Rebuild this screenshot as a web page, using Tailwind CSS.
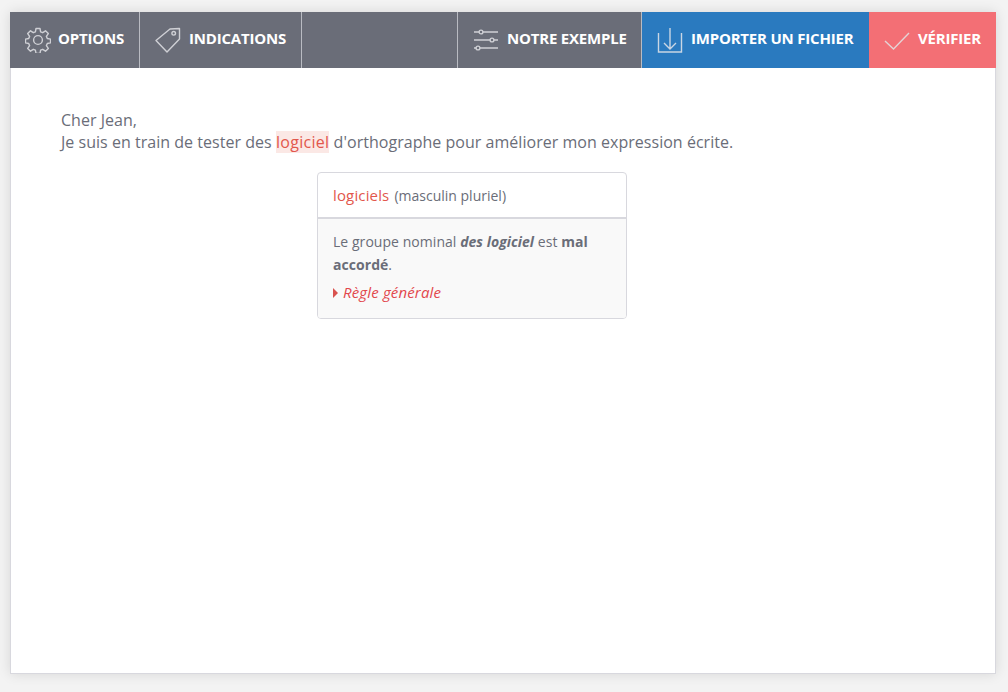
<!DOCTYPE html>
<html lang="fr">
  <head>
    <meta charset="UTF-8" />
    <title>Correcteur</title>
    <script src="https://cdn.jsdelivr.net/npm/@tailwindcss/browser@4"></script>
  </head>
  <body class="h-[692px] overflow-hidden bg-[#f3f3f3] pt-3 pl-[10px] font-['Open_Sans',sans-serif] text-[#6a6d78]">
    <div class="flex h-[662px] w-[986px] flex-col bg-white shadow-[0_0_12px_rgba(0,0,0,0.12)] border-b border-l border-r border-[#d8d8de]">
      <!-- toolbar -->
      <div class="-mx-px flex h-14 shrink-0 bg-[#6a6d78] text-[15px] font-bold tracking-[-0.2px] text-white">
        <div class="flex w-[130px] items-center gap-[7px] border-r border-[#b9bbc2] pl-[15px]">
          <svg class="h-[26px] w-[26px]" viewBox="0 0 26 26" fill="none" stroke="#cfd0d5" stroke-width="1.4" stroke-linejoin="round">
            <circle cx="13" cy="13" r="4.4" />
            <path d="M11 1.5h4l.6 3.3 2.1.9 2.8-1.9 2.8 2.8-1.9 2.8.9 2.1 3.2.6v3.8l-3.2.6-.9 2.1 1.9 2.8-2.8 2.8-2.8-1.9-2.1.9-.6 3.2h-4l-.6-3.2-2.1-.9-2.8 1.9-2.8-2.8 1.9-2.8-.9-2.1-3.2-.6v-3.8l3.2-.6.9-2.1-1.9-2.8 2.8-2.8 2.8 1.9 2.1-.9z" />
          </svg>
          <span class="mb-[3px]">OPTIONS</span>
        </div>
        <div class="flex w-[162px] items-center gap-[8px] border-r border-[#b9bbc2] pl-[15px]">
          <svg class="h-[26px] w-[26px]" viewBox="0 0 26 26" fill="none" stroke="#cfd0d5" stroke-width="1.4" stroke-linejoin="round">
            <path d="M1 13.5 15 2l9.5-.5V12L12 25z" />
            <circle cx="18.7" cy="6.3" r="1.8" />
          </svg>
          <span class="mb-[3px]">INDICATIONS</span>
        </div>
        <div class="w-[156px] border-r border-[#b9bbc2]"></div>
        <div class="flex w-[184px] items-center gap-[8px] border-r border-[#b9bbc2] pl-[15px]">
          <svg class="h-[26px] w-[26px]" viewBox="0 0 26 26" fill="none" stroke="#cfd0d5" stroke-width="1.4">
            <path d="M1 5h5M10 5h15M1 13h16M21 13h4M1 21h2M7 21h18" />
            <circle cx="8" cy="5" r="1.9" />
            <circle cx="19" cy="13" r="1.9" />
            <circle cx="5" cy="21" r="1.9" />
          </svg>
          <span class="mb-[3px]">NOTRE EXEMPLE</span>
        </div>
        <div class="flex w-[227px] items-center gap-[8px] bg-[#2a7abf] pl-[15px]">
          <svg class="h-[26px] w-[26px]" viewBox="0 0 26 26" fill="none" stroke="#c9d6e4" stroke-width="1.4">
            <path d="M1.5 6v19h23V6M13 1v21M7 16l6 6 6-6" />
          </svg>
          <span class="mb-[3px]">IMPORTER UN FICHIER</span>
        </div>
        <div class="flex w-[127px] items-center gap-[8px] bg-[#f36f75] pl-[15px]">
          <svg class="h-[26px] w-[26px]" viewBox="0 0 26 26" fill="none" stroke="#e4d3d5" stroke-width="1.4">
            <path d="M1 14l8.5 8L25 6" />
          </svg>
          <span class="mb-[3px]">VÉRIFIER</span>
        </div>
      </div>

      <!-- text -->
      <div class="pt-[41px] pl-[50px] text-[16px] leading-[22px] tracking-[0.03px]">
        <p>Cher Jean,</p>
        <p>Je suis en train de tester des <span class="bg-[#fbe8e5] tracking-[0.3px] text-[#e2574c]">logiciel</span> d'orthographe pour améliorer mon expression écrite.</p>
      </div>

      <!-- suggestion -->
      <div class="mt-[19px] ml-[306px] w-[310px] overflow-hidden rounded-[4px] border border-[#d8d8de]">
        <div class="flex h-[46px] items-center gap-[5px] border-b-2 border-[#d8d8de] px-[15px]">
          <span class="text-[15px] tracking-[0.15px] text-[#e2574c]">logiciels</span>
          <span class="text-[14px]">(masculin pluriel)</span>
        </div>
        <div class="h-[99px] bg-[#f9f9f9] px-[15px] pt-[11px] text-[14px] leading-[23px] tracking-[0.05px]">
          <p>Le groupe nominal <b class="italic">des logiciel</b> est <b>mal accordé</b>.</p>
          <div class="mt-[5px] flex items-center gap-[5px] text-[15px] tracking-[0.15px] text-[#e2474c] italic">
            <span class="h-0 w-0 border-y-[5px] border-l-[5px] border-y-transparent border-l-[#d9534f]"></span>
            <span>Règle générale</span>
          </div>
        </div>
      </div>
    </div>
  </body>
</html>
